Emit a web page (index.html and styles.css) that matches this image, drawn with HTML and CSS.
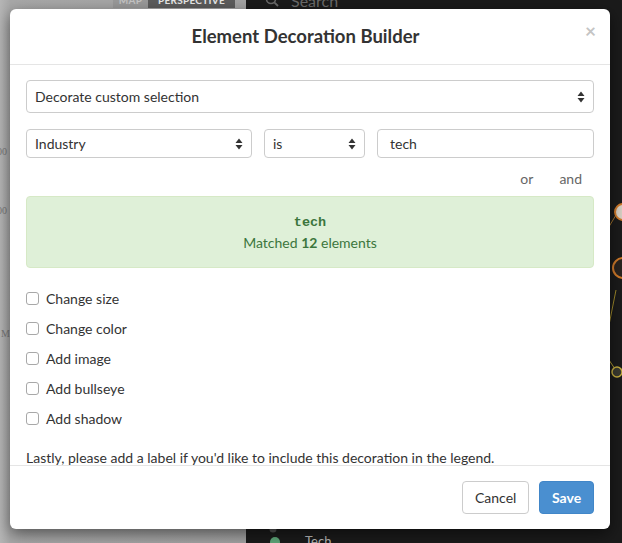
FILE: index.html
```html
<!DOCTYPE html>
<html>
<head>
<meta charset="utf-8">
<title>Element Decoration Builder</title>
<link rel="stylesheet" href="styles.css">
</head>
<body>
<div class="app">
  <aside class="left-pane">
    <div class="tabs">
      <span class="tab tab-map">MAP</span>
      <span class="tab tab-active">PERSPECTIVE</span>
    </div>
    <span class="axis-label axis-1">00</span>
    <span class="axis-label axis-2">00</span>
    <span class="axis-label axis-3">Mo</span>
  </aside>
  <main class="right-pane">
    <div class="search">
      <svg class="search-icon" width="14" height="14" viewBox="0 0 14 14"><circle cx="6" cy="6" r="4.5" fill="none" stroke="#6a6a6a" stroke-width="1.6"/><line x1="9.3" y1="9.3" x2="13" y2="13" stroke="#6a6a6a" stroke-width="1.8"/></svg>
      <span class="search-text">Search</span>
    </div>
    <svg class="graph" width="376" height="543" viewBox="0 0 376 543">
      <line x1="370" y1="215" x2="355" y2="240" stroke="#a0702a" stroke-width="1"/>
      <line x1="370" y1="290" x2="360" y2="340" stroke="#a08a2a" stroke-width="1"/>
      <line x1="355" y1="348" x2="371" y2="372" stroke="#b09a30" stroke-width="1"/>
      <circle cx="377" cy="212" r="8" fill="#d8d0c4" stroke="#d07a2a" stroke-width="2"/>
      <circle cx="377" cy="268" r="10" fill="#2a2420" stroke="#d07a2a" stroke-width="2"/>
      <circle cx="371" cy="372" r="5" fill="#3a3a30" stroke="#c8b040" stroke-width="1.5"/>
      <circle cx="27" cy="529" r="3.5" fill="#555"/>
      <circle cx="29" cy="542" r="5" fill="#5fa87a"/>
    </svg>
    <span class="legend-text">Tech</span>
  </main>
</div>

<div class="modal">
  <div class="modal-header">
    <span class="close">&times;</span>
    <h4 class="modal-title">Element Decoration Builder</h4>
  </div>
  <div class="modal-body">
    <div class="select select-full">
      <span>Decorate custom selection</span>
      <svg class="arrows" width="8" height="12" viewBox="0 0 8 12"><path d="M4 0.5 L7.5 5 L0.5 5 Z M4 11.5 L7.5 7 L0.5 7 Z" fill="#333"/></svg>
    </div>
    <div class="filter-row">
      <div class="select select-sm">
        <span>Industry</span>
        <svg class="arrows" width="8" height="12" viewBox="0 0 8 12"><path d="M4 0.5 L7.5 5 L0.5 5 Z M4 11.5 L7.5 7 L0.5 7 Z" fill="#333"/></svg>
      </div>
      <div class="select select-sm">
        <span>is</span>
        <svg class="arrows" width="8" height="12" viewBox="0 0 8 12"><path d="M4 0.5 L7.5 5 L0.5 5 Z M4 11.5 L7.5 7 L0.5 7 Z" fill="#333"/></svg>
      </div>
      <div class="input-box">tech</div>
    </div>
    <div class="logic">
      <span class="logic-link">or</span>
      <span class="logic-link">and</span>
    </div>
    <div class="match-box">
      <div class="match-term">tech</div>
      <div class="match-count">Matched <b>12</b> elements</div>
    </div>
    <ul class="options">
      <li><span class="checkbox"></span>Change size</li>
      <li><span class="checkbox"></span>Change color</li>
      <li><span class="checkbox"></span>Add image</li>
      <li><span class="checkbox"></span>Add bullseye</li>
      <li><span class="checkbox"></span>Add shadow</li>
    </ul>
    <p class="hint">Lastly, please add a label if you'd like to include this decoration in the legend.</p>
  </div>
  <div class="modal-footer">
    <button class="btn btn-default">Cancel</button>
    <button class="btn btn-primary">Save</button>
  </div>
</div>
</body>
</html>
```

FILE: styles.css
```css
html, body {
  margin: 0;
  padding: 0;
}
body {
  width: 622px;
  height: 543px;
  overflow: hidden;
  position: relative;
  font-family: Lato, "Liberation Sans", sans-serif;
  color: #333;
}
.app {
  display: flex;
  height: 543px;
}
.left-pane {
  width: 246px;
  position: relative;
  background: linear-gradient(to right, #b6b6b6 0, #a8a8a8 10px, #a3a3a3 100%);
}
.tabs {
  display: flex;
  margin-top: -8px;
  padding-left: 113px;
  height: 16px;
}
.tab {
  font-size: 10px;
  line-height: 16px;
  font-weight: 700;
  text-align: center;
  color: #c4c4c4;
  background: #999;
  letter-spacing: 0.3px;
}
.tab-map {
  width: 35px;
}
.tab-active {
  width: 87px;
  background: #5c5c5c;
  color: #e8e8e8;
}
.axis-label {
  position: absolute;
  left: -3px;
  font-size: 10px;
  color: #777;
  font-family: "Liberation Serif", serif;
}
.axis-1 { top: 146px; }
.axis-2 { top: 205px; }
.axis-3 { top: 328px; left: 1px; }
.right-pane {
  flex: 1;
  position: relative;
  background: #1b1b1b;
}
.search {
  display: flex;
  align-items: center;
  gap: 12px;
  margin-top: -10px;
  padding-left: 19px;
  height: 20px;
}
.search-text {
  font-size: 16px;
  color: #6a6a6a;
}
.graph {
  position: absolute;
  left: 0;
  top: 0;
}
.legend-text {
  position: absolute;
  left: 59px;
  top: 533px;
  font-size: 13px;
  color: #bbb;
}

/* modal */
.modal {
  position: absolute;
  left: 10px;
  top: 9px;
  width: 600px;
  background: #fff;
  border-radius: 6px;
  box-shadow: 0 5px 15px rgba(0, 0, 0, 0.5);
}
.modal-header {
  padding: 16px;
  border-bottom: 1px solid #e5e5e5;
}
.close {
  float: right;
  font-size: 19px;
  line-height: 23px;
  font-weight: 700;
  color: #c4c4c4;
  margin-top: -6px;
  margin-right: -2px;
}
.modal-title {
  margin: 0;
  text-align: center;
  font-size: 18.5px;
  line-height: 23px;
  font-weight: 700;
  color: #333;
}
.modal-body {
  height: 400px;
  box-sizing: border-box;
  padding: 15px 16px;
  overflow: hidden;
}
.select, .input-box {
  box-sizing: border-box;
  border: 1px solid #ccc;
  border-radius: 4px;
  font-size: 14px;
  color: #333;
  display: flex;
  align-items: center;
  justify-content: space-between;
  padding: 0 8px;
}
.select-full {
  height: 33px;
}
.select span, .input-box {
  padding-bottom: 1px;
}
.arrows {
  flex: none;
}
.filter-row {
  display: grid;
  grid-template-columns: 226px 101px 1fr;
  gap: 12px;
  margin-top: 16px;
}
.select-sm, .input-box {
  height: 29px;
}
.input-box {
  padding-left: 12px;
}
.logic {
  height: 38px;
  box-sizing: border-box;
  padding-top: 3px;
  padding-right: 12px;
  display: flex;
  justify-content: flex-end;
  align-items: center;
  gap: 26px;
}
.logic-link {
  font-size: 14px;
  color: #666;
}
.match-box {
  height: 72px;
  box-sizing: border-box;
  padding-top: 16px;
  background: #dff0d8;
  border: 1px solid #d6e9c6;
  border-radius: 4px;
  color: #3c763d;
  text-align: center;
}
.match-term {
  font-family: "Liberation Mono", monospace;
  font-weight: 700;
  font-size: 13.5px;
  line-height: 20px;
}
.match-count {
  font-size: 14px;
  line-height: 20px;
}
.options {
  list-style: none;
  margin: 15px 0 0;
  padding: 0;
}
.options li {
  height: 30px;
  display: flex;
  align-items: center;
  font-size: 14px;
  color: #333;
}
.checkbox {
  width: 11px;
  height: 11px;
  border: 1px solid #a8a8a8;
  border-radius: 3px;
  margin-right: 7px;
  background: #fff;
}
.hint {
  margin: 15px 0 0;
  font-size: 14px;
  line-height: 20px;
  color: #333;
}
.modal-footer {
  border-top: 1px solid #e5e5e5;
  padding: 15px 16px;
  display: flex;
  justify-content: flex-end;
  gap: 10px;
}
.btn {
  height: 33px;
  border-radius: 4px;
  font-family: inherit;
  font-size: 14px;
  padding: 0 12px;
  cursor: pointer;
}
.btn-default {
  background: #fff;
  border: 1px solid #ccc;
  color: #333;
  width: 67px;
}
.btn-primary {
  background: #4a8fd0;
  border: 1px solid #4186c8;
  color: #fff;
  font-weight: 700;
  width: 55px;
}
```
